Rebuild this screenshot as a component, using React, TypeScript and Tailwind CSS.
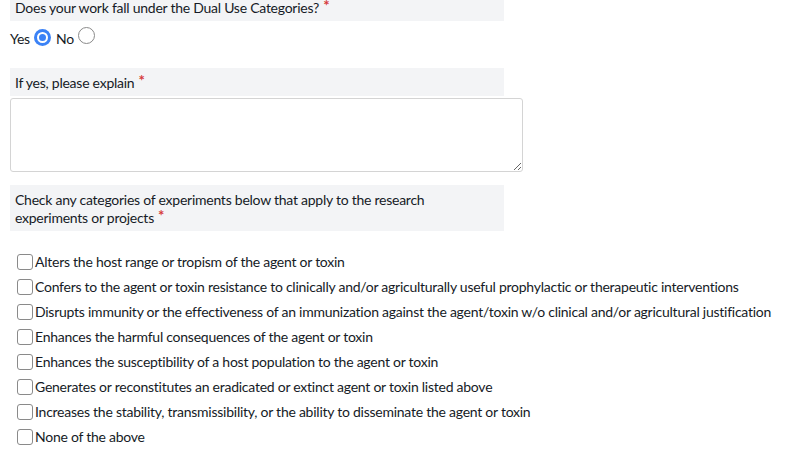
import React, { useState } from 'react';

const categories = [
  'Alters the host range or tropism of the agent or toxin',
  'Confers to the agent or toxin resistance to clinically and/or agriculturally useful prophylactic or therapeutic interventions',
  'Disrupts immunity or the effectiveness of an immunization against the agent/toxin w/o clinical and/or agricultural justification',
  'Enhances the harmful consequences of the agent or toxin',
  'Enhances the susceptibility of a host population to the agent or toxin',
  'Generates or reconstitutes an eradicated or extinct agent or toxin listed above',
  'Increases the stability, transmissibility, or the ability to disseminate the agent or toxin',
  'None of the above',
];

function Label({ children }: { children: React.ReactNode }) {
  return (
    <div className="w-[494px] bg-[#f3f4f6] px-[5px] pt-[6px] pb-[4px] leading-[18px]">
      {children}
      <span className="ml-[4px] inline-block align-top text-[15px] font-bold leading-[12px] text-[#d63a3a]">*</span>
    </div>
  );
}

function Radio({ checked, onClick }: { checked: boolean; onClick: () => void }) {
  return (
    <button
      type="button"
      onClick={onClick}
      className={
        checked
          ? 'flex h-[17px] w-[17px] items-center justify-center rounded-full bg-[#3b82f6]'
          : 'h-[17px] w-[17px] rounded-full border border-[#8a8a8a] bg-white'
      }
    >
      {checked && <span className="h-[11px] w-[11px] rounded-full border-2 border-white bg-[#3b82f6]" />}
    </button>
  );
}

export default function App() {
  const [dualUse, setDualUse] = useState<'yes' | 'no'>('yes');
  const [checked, setChecked] = useState<boolean[]>(categories.map(() => false));

  const toggle = (i: number) => {
    setChecked((prev) => prev.map((v, j) => (j === i ? !v : v)));
  };

  return (
    <div className="h-[460px] overflow-hidden bg-white pl-[10px] font-['Lato',sans-serif] text-[14px] tracking-[-0.25px] text-[#161b26]">
      <div className="-mt-[7px]">
        <Label>Does your work fall under the Dual Use Categories?</Label>
      </div>

      <div className="mt-[6px] flex h-[20px] items-center leading-[20px]">
        <span className="mt-[3px]">Yes</span>
        <span className="ml-[4px]">
          <Radio checked={dualUse === 'yes'} onClick={() => setDualUse('yes')} />
        </span>
        <span className="ml-[5px] mt-[3px]">No</span>
        <span className="ml-[4px]">
          <Radio checked={dualUse === 'no'} onClick={() => setDualUse('no')} />
        </span>
      </div>

      <div className="mt-[21px]">
        <Label>If yes, please explain</Label>
      </div>

      <textarea className="mt-[2px] block h-[74px] w-[513px] rounded-[3px] border border-[#d4d4d4] bg-white" />

      <div className="mt-[13px]">
        <Label>
          Check any categories of experiments below that apply to the research
          <br />
          experiments or projects
        </Label>
      </div>

      <div className="mt-[18px] flex flex-col">
        {categories.map((c, i) => (
          <label key={c} className="flex h-[25px] cursor-pointer items-center whitespace-nowrap">
            <input type="checkbox" checked={checked[i]} onChange={() => toggle(i)} className="sr-only" />
            <span
              className={
                checked[i]
                  ? 'ml-[7px] mr-[2px] h-[16px] w-[16px] rounded-[3px] border border-[#3b82f6] bg-[#3b82f6]'
                  : 'ml-[7px] mr-[2px] h-[16px] w-[16px] rounded-[3px] border border-[#8a8a8a] bg-white'
              }
            />
            <span>{c}</span>
          </label>
        ))}
      </div>
    </div>
  );
}
